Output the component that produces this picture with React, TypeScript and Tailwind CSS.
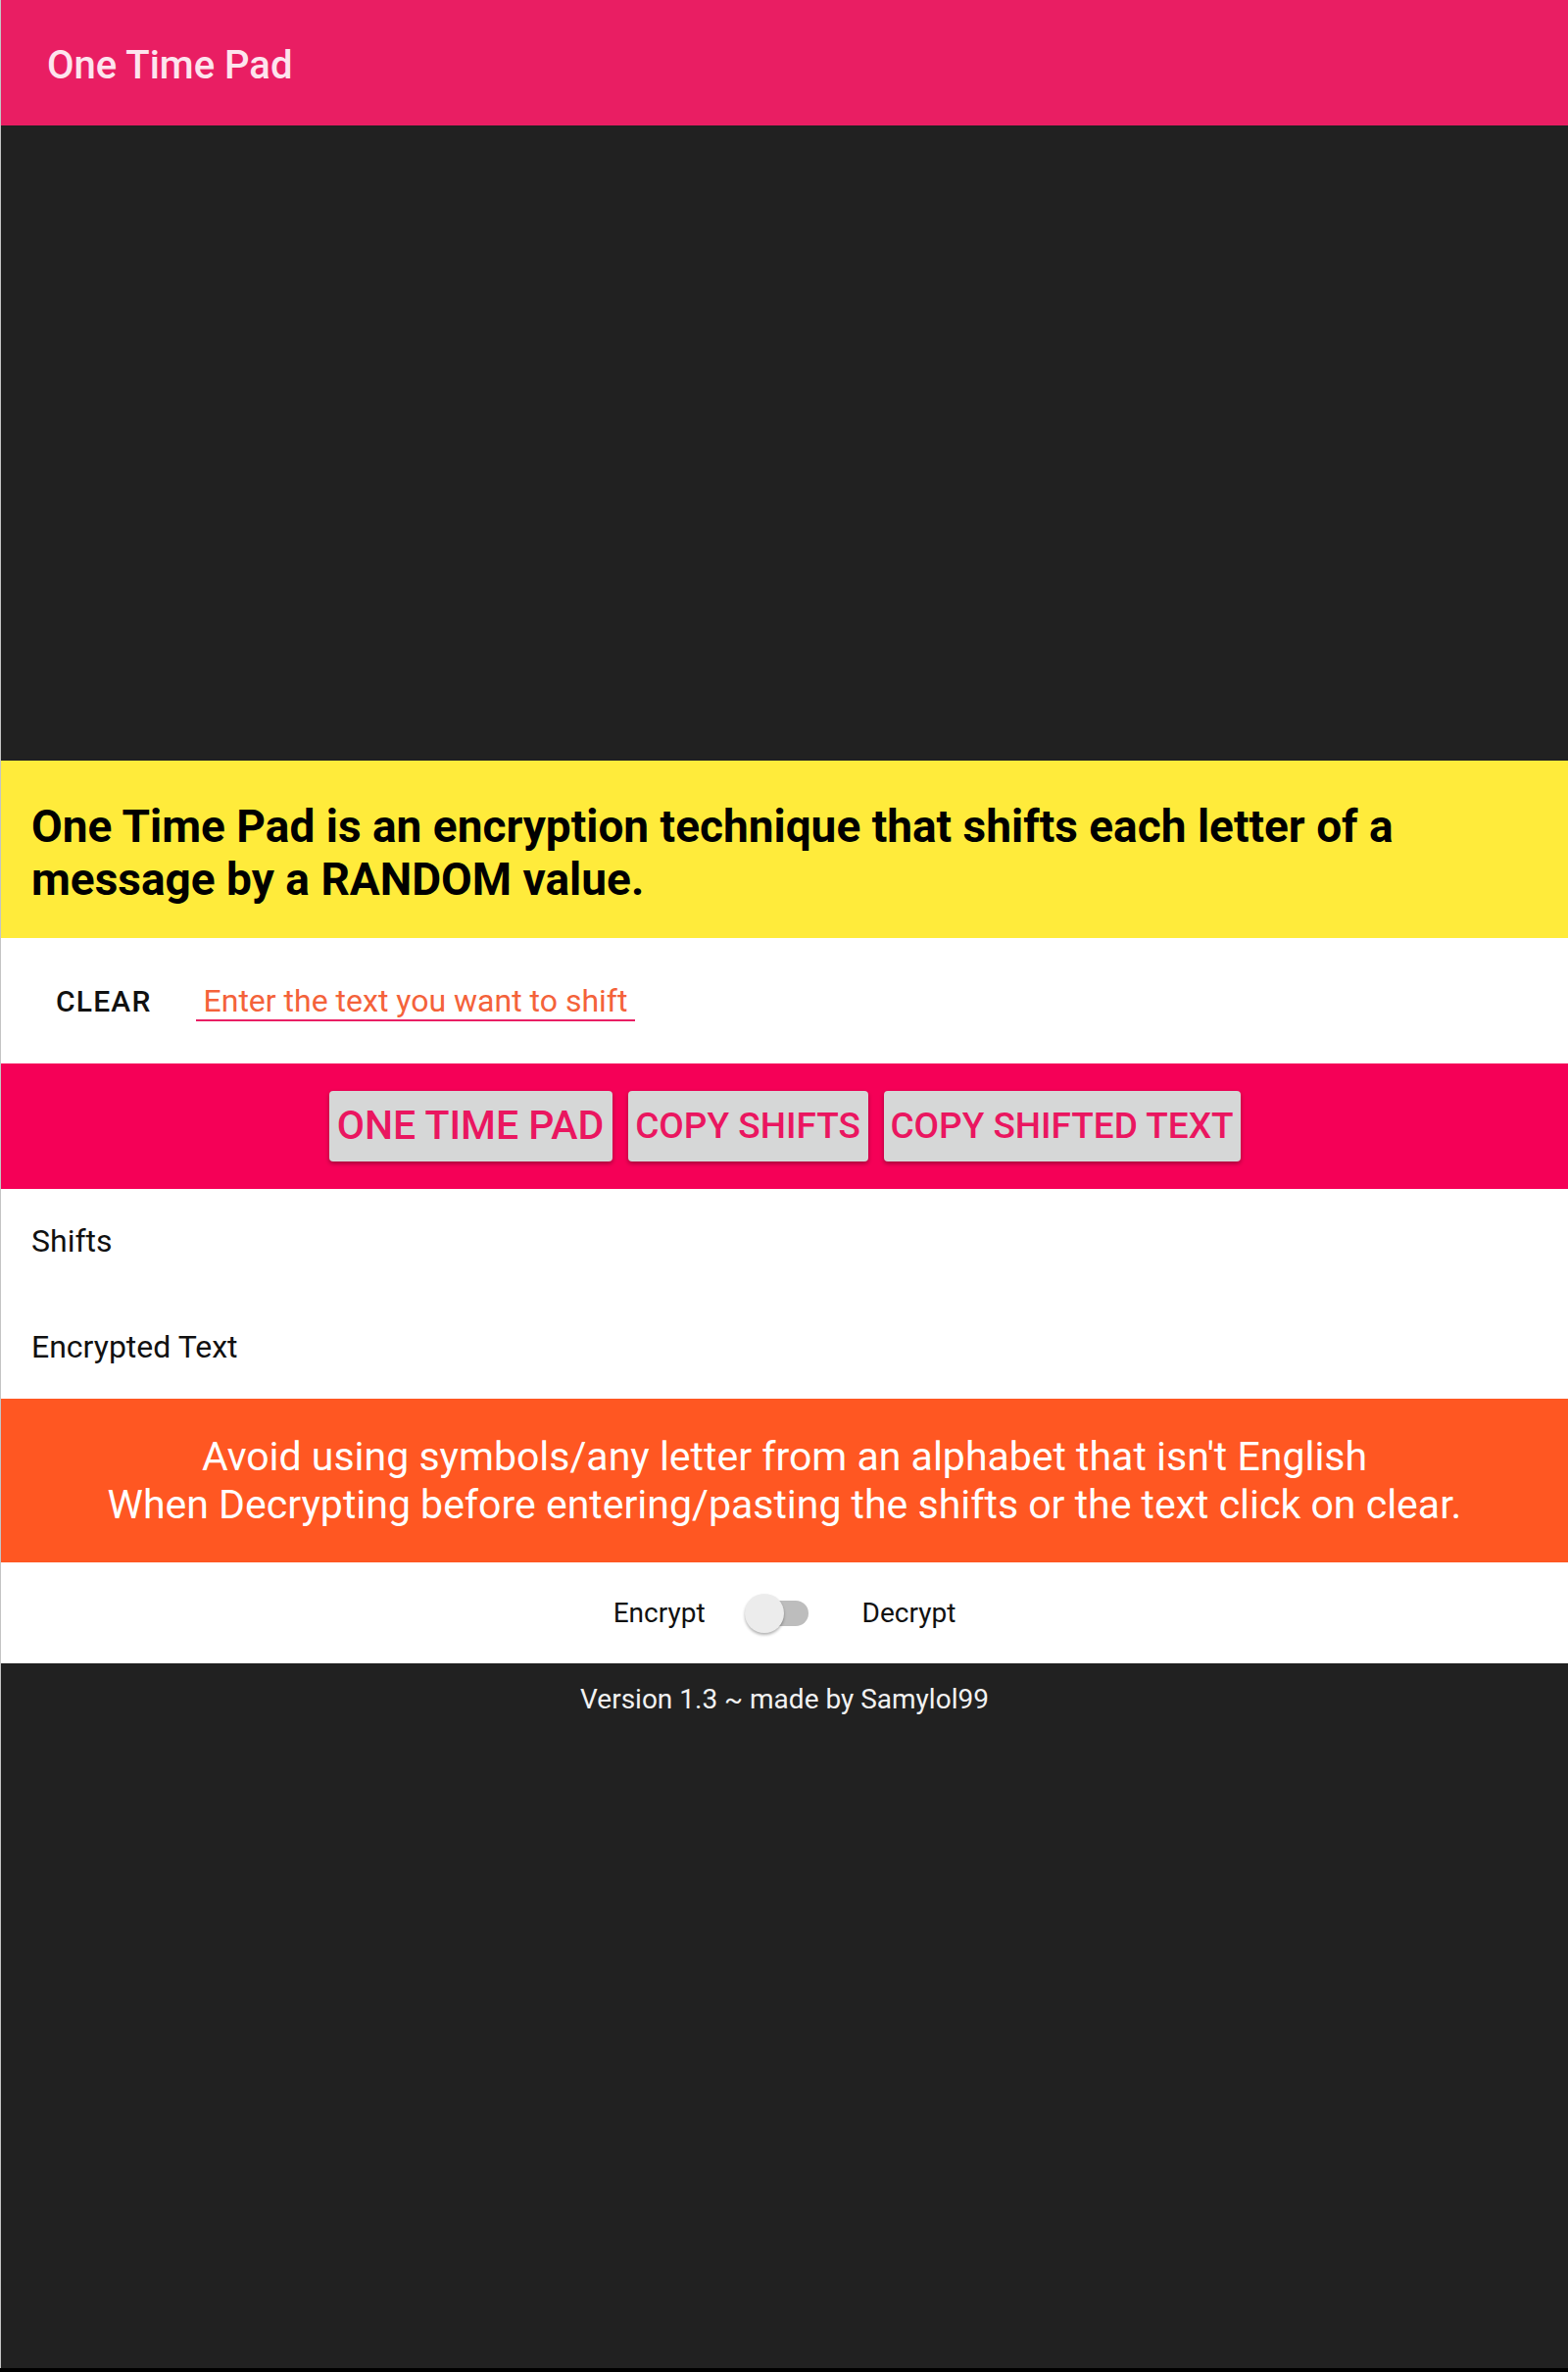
import React, { useState } from 'react';

const actions = [
  { label: 'ONE TIME PAD', cls: 'w-[289px] text-[41px]' },
  { label: 'COPY SHIFTS', cls: 'w-[245px] text-[37px]' },
  { label: 'COPY SHIFTED TEXT', cls: 'w-[364px] text-[37px]' },
];

const App: React.FC = () => {
  const [text, setText] = useState('');
  const [decrypt, setDecrypt] = useState(false);

  return (
    <div className="bg-black h-[2420px] font-['Roboto',sans-serif]">
      <div className="h-[2416px] bg-[#212121] border-l border-[#c4c4c4] flex flex-col">
        {/* App bar */}
        <div className="h-[128px] bg-[#e91e63] flex items-center pl-[47px] pt-[5px] flex-shrink-0">
          <h1 className="text-[40px] font-medium text-[#fde4ee]">One Time Pad</h1>
        </div>

        {/* empty banner space */}
        <div className="h-[648px] flex-shrink-0" />

        {/* Description */}
        <div className="h-[181px] bg-[#ffeb3b] px-[31px] pt-[40px] flex-shrink-0">
          <p className="text-[46px] leading-[54px] font-bold text-black">
            One Time Pad is an encryption technique that shifts each letter of a message by a RANDOM value.
          </p>
        </div>

        {/* Input row */}
        <div className="h-[128px] bg-white flex items-center pl-[56px] flex-shrink-0">
          <button
            onClick={() => setText('')}
            className="text-[30px] font-medium tracking-[1.2px] text-[#111]"
          >
            CLEAR
          </button>
          <input
            value={text}
            onChange={(e) => setText(e.target.value)}
            placeholder="Enter the text you want to shift"
            className="ml-[45px] w-[448px] pl-[8px] mt-[2px] text-[32px] leading-[38px] border-b-2 border-[#e91e63] outline-none placeholder:text-[#f4623a] text-black"
          />
        </div>

        {/* Action buttons */}
        <div className="h-[128px] bg-[#f50057] flex items-center justify-center gap-[16px] flex-shrink-0">
          {actions.map((a) => (
            <button
              key={a.label}
              className={`h-[72px] ${a.cls} whitespace-nowrap text-center font-medium bg-[#d6d7d7] rounded-[4px] shadow-[0_2px_4px_rgba(0,0,0,0.35)] text-[#ea1660]`}
            >
              {a.label}
            </button>
          ))}
        </div>

        {/* Results */}
        <div className="bg-white pt-[34px] pb-[34px] px-[31px] flex flex-col gap-[70px] text-[32px] leading-[38px] text-[#111] flex-shrink-0">
          <p>Shifts</p>
          <p>Encrypted Text</p>
        </div>

        {/* Warning */}
        <div className="h-[167px] bg-[#ff5722] flex flex-col items-center justify-center text-center text-white text-[41px] leading-[49px] flex-shrink-0">
          <p>Avoid using symbols/any letter from an alphabet that isn't English</p>
          <p>When Decrypting before entering/pasting the shifts or the text click on clear.</p>
        </div>

        {/* Mode switch */}
        <div className="h-[103px] bg-white flex items-center justify-center text-[28px] text-[#111] flex-shrink-0">
          <span>Encrypt</span>
          <button
            onClick={() => setDecrypt(!decrypt)}
            className="relative ml-[40px] w-[65px] h-[40px]"
          >
            <span className="absolute left-[10px] top-[7px] w-[55px] h-[26px] rounded-full bg-[#bdbdbd]" />
            <span
              className={`absolute top-0 w-[40px] h-[40px] rounded-full bg-[#ececec] shadow-[0_2px_3px_rgba(0,0,0,0.3)] ${
                decrypt ? 'left-[25px]' : 'left-0'
              }`}
            />
          </button>
          <span className="ml-[55px]">Decrypt</span>
        </div>

        {/* Footer */}
        <p className="mt-[20px] text-center text-[28px] leading-[33px] text-[#f2f2f2]">
          Version 1.3 ~ made by Samylol99
        </p>
      </div>
    </div>
  );
};

export default App;
